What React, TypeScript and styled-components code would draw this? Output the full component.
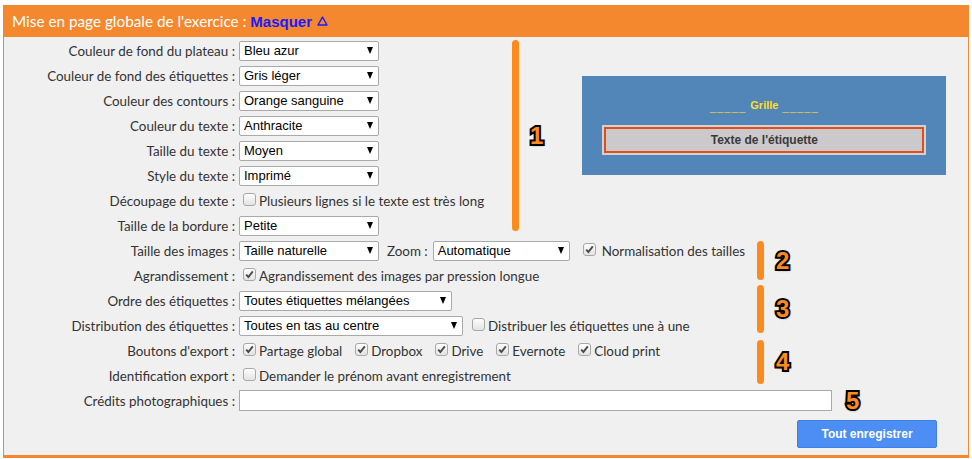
import React from 'react';
import styled, { createGlobalStyle } from 'styled-components';

const GlobalStyle = createGlobalStyle`
  body {
    margin: 0;
    background: #fff;
    font-family: 'Lato', 'Noto Sans', sans-serif;
  }
`;

const ORANGE = '#f3882f';
const BAR = '#fd8a1c';

const Panel = styled.section`
  width: 966px;
  margin: 5px 0 0 3px;
`;

const Header = styled.div`
  height: 32px;
  background: ${ORANGE};
  color: #fff;
  font-size: 15.3px;
  line-height: 33px;
  padding-left: 9px;
  display: flex;
  align-items: center;
  white-space: pre;
`;

const Toggle = styled.span`
  color: #1a1aff;
  font-weight: bold;
  font-family: 'Liberation Sans', Arial, sans-serif;
  font-size: 15px;
  display: inline-flex;
  align-items: center;
  gap: 5px;
`;

const Body = styled.div`
  background: #f0f0f0;
  border-left: 1px solid ${ORANGE};
  border-right: 1px solid ${ORANGE};
  border-bottom: 3px solid ${ORANGE};
  padding: 1px 0 7px;
`;

const Group = styled.div`
  display: flex;
  align-items: flex-start;
`;

const Fields = styled.div<{ $width: number }>`
  width: ${(p) => p.$width}px;
  flex: none;
  display: flex;
  flex-direction: column;
`;

const Row = styled.div`
  height: 25px;
  display: flex;
  align-items: center;
`;

const Label = styled.div`
  width: 231px;
  flex: none;
  text-align: right;
  font-size: 13.4px;
  color: #333;
  margin-right: 4px;
  white-space: nowrap;
`;

const Select = styled.div<{ $width: number; $gap?: number }>`
  width: ${(p) => p.$width}px;
  margin-left: ${(p) => p.$gap ?? 0}px;
  height: 20px;
  box-sizing: border-box;
  flex: none;
  display: flex;
  align-items: center;
  justify-content: space-between;
  background: #fff;
  border: 1px solid #a9a9a9;
  border-radius: 2px;
  padding: 0 5px 0 4px;
  font-family: 'Liberation Sans', Arial, sans-serif;
  font-size: 13px;
  color: #000;
`;

const Arrow = styled.span`
  width: 0;
  height: 0;
  border-left: 3.5px solid transparent;
  border-right: 3.5px solid transparent;
  border-top: 7px solid #000;
`;

const TextInput = styled.div<{ $width: number }>`
  width: ${(p) => p.$width}px;
  height: 21px;
  box-sizing: border-box;
  flex: none;
  background: #fff;
  border: 1px solid #a9a9a9;
`;

const Inline = styled.span<{ $gap?: number }>`
  font-size: 13.4px;
  color: #333;
  margin-left: ${(p) => p.$gap ?? 0}px;
  white-space: nowrap;
`;

const Check = styled.label<{ $gap?: number }>`
  display: inline-flex;
  align-items: center;
  margin-left: ${(p) => p.$gap ?? 4}px;
  font-size: 13.4px;
  color: #333;
  white-space: nowrap;
`;

const Box = styled.span`
  width: 13px;
  height: 13px;
  box-sizing: border-box;
  border: 1px solid #a8a8a8;
  border-radius: 3px;
  background: linear-gradient(#fdfdfd, #e3e3e3);
  margin-right: 3px;
  display: inline-flex;
  align-items: center;
  justify-content: center;
  position: relative;
  top: -1px;
`;

const Marker = styled.div<{ $top: number; $gap: number }>`
  display: flex;
  align-items: center;
  margin-top: ${(p) => p.$top}px;
  gap: ${(p) => p.$gap}px;
`;

const Bar = styled.div<{ $height: number }>`
  width: 7px;
  height: ${(p) => p.$height}px;
  border-radius: 4px;
  background: ${BAR};
`;

const Num = styled.span`
  font-family: 'Liberation Sans', Arial, sans-serif;
  font-weight: bold;
  font-size: 24px;
  line-height: 24px;
  color: ${BAR};
  -webkit-text-stroke: 4px #000;
  paint-order: stroke fill;
  text-shadow: 1px 2px 2px rgba(0, 0, 0, 0.35);
`;

const Preview = styled.div`
  margin: 38px 0 0 39px;
  width: 364px;
  height: 99px;
  background: #5386b8;
  display: flex;
  flex-direction: column;
  align-items: center;
  padding-top: 22px;
  box-sizing: border-box;
`;

const GridTitle = styled.div`
  font-family: 'Liberation Sans', Arial, sans-serif;
  font-weight: bold;
  font-size: 11px;
  color: #ffdd1e;
  height: 14px;
  line-height: 14px;
  display: flex;
  align-items: flex-start;
  gap: 4px;
`;

const Dashes = styled.span`
  color: #e8c64a;
  font-weight: normal;
  letter-spacing: 1.2px;
  position: relative;
  top: 2px;
`;

const Sample = styled.div`
  margin-top: 13px;
  width: 324px;
  height: 30px;
  box-sizing: border-box;
  border: 2px solid #d3d1d3;
  display: flex;
`;

const SampleInner = styled.div`
  flex: 1;
  border: 2px solid #e0501c;
  background: #ccc9cc;
  display: flex;
  align-items: center;
  justify-content: center;
  font-family: 'Liberation Sans', Arial, sans-serif;
  font-size: 12px;
  font-weight: bold;
  color: #3a3a3a;
`;

const Actions = styled.div`
  display: flex;
  justify-content: flex-end;
  padding-right: 31px;
  margin-top: 7px;
`;

const SaveButton = styled.button`
  width: 140px;
  height: 28px;
  background: #4d8ef4;
  border: 1px solid #3f7fe6;
  border-radius: 2px;
  color: #fff;
  font-family: 'Liberation Sans', Arial, sans-serif;
  font-weight: bold;
  font-size: 12px;
`;

const CheckBox = ({ checked, children, gap }: { checked?: boolean; children: React.ReactNode; gap?: number }) => (
  <Check $gap={gap}>
    <Box>
      {checked && (
        <svg width="9" height="9" viewBox="0 0 9 9">
          <path d="M1.2 4.6 L3.4 7 L7.8 1.4" fill="none" stroke="#4a4a4a" strokeWidth="1.9" />
        </svg>
      )}
    </Box>
    {children}
  </Check>
);

const Dropdown = ({ value, width = 140, gap }: { value: string; width?: number; gap?: number }) => (
  <Select $width={width} $gap={gap}>
    <span>{value}</span>
    <Arrow />
  </Select>
);

const selects1: [string, string][] = [
  ['Couleur de fond du plateau :', 'Bleu azur'],
  ['Couleur de fond des étiquettes :', 'Gris léger'],
  ['Couleur des contours :', 'Orange sanguine'],
  ['Couleur du texte :', 'Anthracite'],
  ['Taille du texte :', 'Moyen'],
  ['Style du texte :', 'Imprimé'],
];

const exports = ['Partage global', 'Dropbox', 'Drive', 'Evernote', 'Cloud print'];

export default function App() {
  return (
    <>
      <GlobalStyle />
      <Panel>
        <Header>
          {"Mise en page globale de l'exercice : "}
          <Toggle>
            Masquer
            <svg width="11" height="10" viewBox="0 0 11 10">
              <path d="M5.5 1.2 L10 9 L1 9 Z" fill="none" stroke="#1a1aff" strokeWidth="1.4" strokeLinejoin="round" />
            </svg>
          </Toggle>
        </Header>
        <Body>
          <Group>
            <Fields $width={508}>
              {selects1.map(([label, value]) => (
                <Row key={label}>
                  <Label>{label}</Label>
                  <Dropdown value={value} />
                </Row>
              ))}
              <Row>
                <Label>Découpage du texte :</Label>
                <CheckBox>Plusieurs lignes si le texte est très long</CheckBox>
              </Row>
              <Row>
                <Label>Taille de la bordure :</Label>
                <Dropdown value="Petite" />
              </Row>
            </Fields>
            <Marker $top={2} $gap={11}>
              <Bar $height={191} />
              <Num>1</Num>
            </Marker>
            <Preview>
              <GridTitle>
                <Dashes>_____</Dashes>
                <span>Grille</span>
                <Dashes>_____</Dashes>
              </GridTitle>
              <Sample>
                <SampleInner>Texte de l'étiquette</SampleInner>
              </Sample>
            </Preview>
          </Group>

          <Group>
            <Fields $width={753}>
              <Row>
                <Label>Taille des images :</Label>
                <Dropdown value="Taille naturelle" />
                <Inline $gap={8}>Zoom :</Inline>
                <Dropdown value="Automatique" width={137} gap={5} />
                <CheckBox checked gap={13}>
                  <Inline $gap={3}>Normalisation des tailles</Inline>
                </CheckBox>
              </Row>
              <Row>
                <Label>Agrandissement :</Label>
                <CheckBox checked>Agrandissement des images par pression longue</CheckBox>
              </Row>
            </Fields>
            <Marker $top={3} $gap={12}>
              <Bar $height={39} />
              <Num>2</Num>
            </Marker>
          </Group>

          <Group>
            <Fields $width={753}>
              <Row>
                <Label>Ordre des étiquettes :</Label>
                <Dropdown value="Toutes étiquettes mélangées" width={213} />
              </Row>
              <Row>
                <Label>Distribution des étiquettes :</Label>
                <Dropdown value="Toutes en tas au centre" width={224} />
                <CheckBox gap={9}>Distribuer les étiquettes une à une</CheckBox>
              </Row>
            </Fields>
            <Marker $top={-3} $gap={12}>
              <Bar $height={48} />
              <Num>3</Num>
            </Marker>
          </Group>

          <Group>
            <Fields $width={753}>
              <Row>
                <Label>Boutons d'export :</Label>
                {exports.map((name, i) => (
                  <CheckBox key={name} checked gap={i === 0 ? 4 : 13}>
                    {name}
                  </CheckBox>
                ))}
              </Row>
              <Row>
                <Label>Identification export :</Label>
                <CheckBox>Demander le prénom avant enregistrement</CheckBox>
              </Row>
            </Fields>
            <Marker $top={2} $gap={12}>
              <Bar $height={44} />
              <Num>4</Num>
            </Marker>
          </Group>

          <Row>
            <Label>Crédits photographiques :</Label>
            <TextInput $width={593} />
            <Inline $gap={14}>
              <Num>5</Num>
            </Inline>
          </Row>

          <Actions>
            <SaveButton>Tout enregistrer</SaveButton>
          </Actions>
        </Body>
      </Panel>
    </>
  );
}
